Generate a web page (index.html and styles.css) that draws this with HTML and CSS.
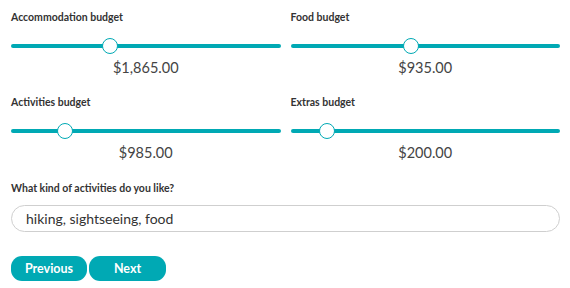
FILE: index.html
```html
<!DOCTYPE html>
<html lang="en">
  <head>
    <meta charset="UTF-8" />
    <meta name="viewport" content="width=device-width, initial-scale=1.0" />
    <title>Trip budget</title>
    <link rel="stylesheet" href="styles.css">
  </head>
  <body>
    <form id="budget-form">
      <div class="budget-grid">
        <div class="budget">
          <label class="label" for="accommodation">Accommodation budget</label>
          <input type="range" id="accommodation" min="0" max="1000" value="359" />
          <div class="amount">$1,865.00</div>
        </div>
        <div class="budget">
          <label class="label" for="food">Food budget</label>
          <input type="range" id="food" min="0" max="1000" value="445" />
          <div class="amount">$935.00</div>
        </div>
        <div class="budget">
          <label class="label" for="activities">Activities budget</label>
          <input type="range" id="activities" min="0" max="1000" value="182" />
          <div class="amount">$985.00</div>
        </div>
        <div class="budget">
          <label class="label" for="extras">Extras budget</label>
          <input type="range" id="extras" min="0" max="1000" value="112" />
          <div class="amount">$200.00</div>
        </div>
      </div>

      <label class="label" for="likes">What kind of activities do you like?</label>
      <input type="text" id="likes" class="text-input" value="hiking, sightseeing, food" />

      <div id="buttons-container">
        <button type="button" id="prev">Previous</button>
        <button type="button" id="next">Next</button>
      </div>
    </form>
  </body>
</html>
```

FILE: styles.css
```css
* {
  margin: 0;
  padding: 0;
  box-sizing: border-box;
}

:root {
  --teal: #00a9b4;
  --text: #3a3a3a;
  --border: #cfcfcf;
}

body {
  background-color: #fff;
  font-family: Lato, "Open Sans", sans-serif;
  color: var(--text);
}

#budget-form {
  display: flex;
  flex-direction: column;
  padding: 11px 10px 0 11px;
}

.budget-grid {
  display: grid;
  grid-template-columns: 1fr 1fr;
  column-gap: 10px;
  row-gap: 20px;
}

.budget {
  display: flex;
  flex-direction: column;
}

.label {
  display: block;
  font-size: 10.5px;
  font-weight: 700;
  color: #333;
  line-height: 13px;
}

input[type="range"] {
  -webkit-appearance: none;
  appearance: none;
  width: 100%;
  height: 16px;
  margin-top: 14px;
  background: transparent;
}

input[type="range"]::-webkit-slider-runnable-track {
  height: 3.5px;
  background: var(--teal);
  border-radius: 2px;
}

input[type="range"]::-webkit-slider-thumb {
  -webkit-appearance: none;
  width: 16px;
  height: 16px;
  margin-top: -6.25px;
  border-radius: 50%;
  background: #fff;
  border: 1.5px solid var(--teal);
}

.amount {
  margin-top: 5px;
  text-align: center;
  font-size: 14.5px;
  line-height: 17px;
  color: #444;
}

#budget-form > .label {
  margin-top: 21px;
}

.text-input {
  margin-top: 10px;
  width: 549px;
  height: 27px;
  padding: 0 14px;
  border: 1px solid var(--border);
  border-radius: 14px;
  font-family: Lato, "Open Sans", sans-serif;
  font-size: 14px;
  color: #333;
  outline: none;
}

#buttons-container {
  display: flex;
  gap: 2px;
  margin-top: 24px;
}

button {
  width: 76px;
  height: 25px;
  border: none;
  border-radius: 11px;
  background-color: var(--teal);
  color: #fff;
  font-family: Lato, "Open Sans", sans-serif;
  font-size: 12.5px;
  font-weight: 700;
  padding-bottom: 1px;
}

#next {
  width: 77px;
}
```
